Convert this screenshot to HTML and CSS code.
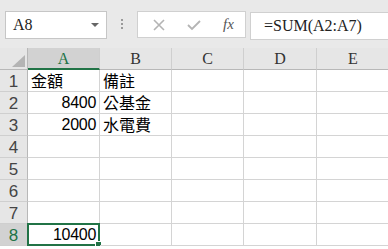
FILE: index.html
```html
<!DOCTYPE html>
<html lang="zh-Hant">
<head>
    <meta charset="UTF-8">
    <title>Excel</title>
    <link rel="stylesheet" href="styles.css">
</head>
<body>
    <div class="toolbar">
        <div class="name-box">
            <span>A8</span>
            <span class="caret"></span>
        </div>
        <div class="grip"><i></i><i></i><i></i></div>
        <div class="actions">
            <svg class="icon" width="12" height="12" viewBox="0 0 12 12"><path d="M1 1L11 11M11 1L1 11" stroke="#b4b4b4" stroke-width="1.6"/></svg>
            <svg class="icon" width="14" height="12" viewBox="0 0 14 12"><path d="M1 6L5 10L13 2" stroke="#b4b4b4" stroke-width="1.8" fill="none"/></svg>
            <span class="fx">fx</span>
        </div>
        <div class="formula">=SUM(A2:A7)</div>
    </div>

    <div class="sheet">
        <div class="corner"><span class="tri"></span></div>
        <div class="col-head active">A</div>
        <div class="col-head">B</div>
        <div class="col-head">C</div>
        <div class="col-head">D</div>
        <div class="col-head">E</div>

        <div class="row-head">1</div>
        <div class="cell cjk">金額</div>
        <div class="cell cjk">備註</div>
        <div class="cell"></div><div class="cell"></div><div class="cell"></div>

        <div class="row-head">2</div>
        <div class="cell num">8400</div>
        <div class="cell cjk">公基金</div>
        <div class="cell"></div><div class="cell"></div><div class="cell"></div>

        <div class="row-head">3</div>
        <div class="cell num">2000</div>
        <div class="cell cjk">水電費</div>
        <div class="cell"></div><div class="cell"></div><div class="cell"></div>

        <div class="row-head">4</div>
        <div class="cell"></div><div class="cell"></div><div class="cell"></div><div class="cell"></div><div class="cell"></div>

        <div class="row-head">5</div>
        <div class="cell"></div><div class="cell"></div><div class="cell"></div><div class="cell"></div><div class="cell"></div>

        <div class="row-head">6</div>
        <div class="cell"></div><div class="cell"></div><div class="cell"></div><div class="cell"></div><div class="cell"></div>

        <div class="row-head">7</div>
        <div class="cell"></div><div class="cell"></div><div class="cell"></div><div class="cell"></div><div class="cell"></div>

        <div class="row-head active">8</div>
        <div class="cell num selected">10400<span class="handle"></span></div>
        <div class="cell"></div><div class="cell"></div><div class="cell"></div><div class="cell"></div>
    </div>
</body>
</html>
```

FILE: styles.css
```css
:root {
    --green: #217346;
    --grid: #d4d4d4;
    --head-bg: #e6e6e6;
    --head-active: #d2d2d2;
    --bar-bg: #e9e9e9;
}

body {
    margin: 0;
    background: #ffffff;
    overflow: hidden;
}

/* Barra de fórmulas */
.toolbar {
    display: flex;
    align-items: flex-start;
    height: 48px;
    padding: 11px 0 0 5px;
    box-sizing: border-box;
    background: var(--bar-bg);
}

.name-box {
    display: flex;
    align-items: center;
    justify-content: space-between;
    width: 102px;
    height: 28px;
    box-sizing: border-box;
    padding: 0 7px 0 7px;
    background: #fff;
    border: 1px solid #c6c6c6;
    font-family: "Liberation Serif", serif;
    font-size: 16px;
    color: #222;
}

.caret {
    width: 0;
    height: 0;
    border-left: 4px solid transparent;
    border-right: 4px solid transparent;
    border-top: 4px solid #666;
    margin-top: -1px;
}

.grip {
    display: flex;
    flex-direction: column;
    gap: 2px;
    width: 30px;
    align-items: center;
    padding-top: 8px;
}

.grip i {
    width: 2px;
    height: 2px;
    background: #9a9a9a;
}

.actions {
    display: flex;
    align-items: center;
    width: 109px;
    height: 27px;
    box-sizing: border-box;
    padding-left: 15px;
    background: #fff;
    border: 1px solid #d0d0d0;
}

.actions .icon {
    margin-right: 22px;
}

.fx {
    font-family: "Liberation Serif", serif;
    font-style: italic;
    font-size: 15px;
    color: #555;
}

.formula {
    flex: 1;
    height: 28px;
    margin-left: 4px;
    margin-top: 1px;
    box-sizing: border-box;
    padding-left: 13px;
    line-height: 26px;
    background: #fff;
    border: 1px solid #d0d0d0;
    border-right: none;
    font-family: "Liberation Serif", serif;
    font-size: 16px;
    color: #222;
}

/* Hoja */
.sheet {
    display: grid;
    grid-template-columns: 28px 72px 72px 72px 73px 73px;
    grid-template-rows: 22px repeat(8, 22px);
}

.corner {
    position: relative;
    background: var(--head-bg);
    border-right: 1px solid #b8b8b8;
    border-bottom: 1px solid #b8b8b8;
}

.tri {
    position: absolute;
    right: 2px;
    bottom: 2px;
    width: 0;
    height: 0;
    border-left: 13px solid transparent;
    border-bottom: 12px solid #b4b4b4;
}

.col-head {
    background: var(--head-bg);
    border-right: 1px solid #cfcfcf;
    border-bottom: 1px solid #b8b8b8;
    text-align: center;
    line-height: 22px;
    font-family: "Liberation Serif", serif;
    font-size: 16px;
    color: #333;
}

.col-head.active {
    background: var(--head-active);
    border-bottom: 2px solid var(--green);
    color: #217346;
    line-height: 21px;
}

.row-head {
    background: var(--head-bg);
    border-right: 1px solid #b8b8b8;
    border-bottom: 1px solid #cfcfcf;
    text-align: center;
    line-height: 23px;
    font-family: "Liberation Sans", sans-serif;
    font-size: 17px;
    color: #444;
}

.row-head.active {
    background: var(--head-active);
    color: #217346;
}

.cell {
    position: relative;
    border-right: 1px solid var(--grid);
    border-bottom: 1px solid var(--grid);
    padding: 0 3px;
    line-height: 22px;
    font-family: "Liberation Sans", sans-serif;
    font-size: 16px;
    color: #000;
}

.cjk {
    font-family: "Noto Sans CJK TC", sans-serif;
    font-size: 16px;
    line-height: 21px;
}

.num {
    text-align: right;
    letter-spacing: -0.3px;
}

.selected {
    border: 2px solid var(--green);
    margin: -1px 0 0 -1px;
    line-height: 20px;
    padding-right: 2px;
}

.handle {
    position: absolute;
    right: -4px;
    bottom: -4px;
    width: 5px;
    height: 5px;
    background: var(--green);
    border: 1px solid #fff;
}
```
